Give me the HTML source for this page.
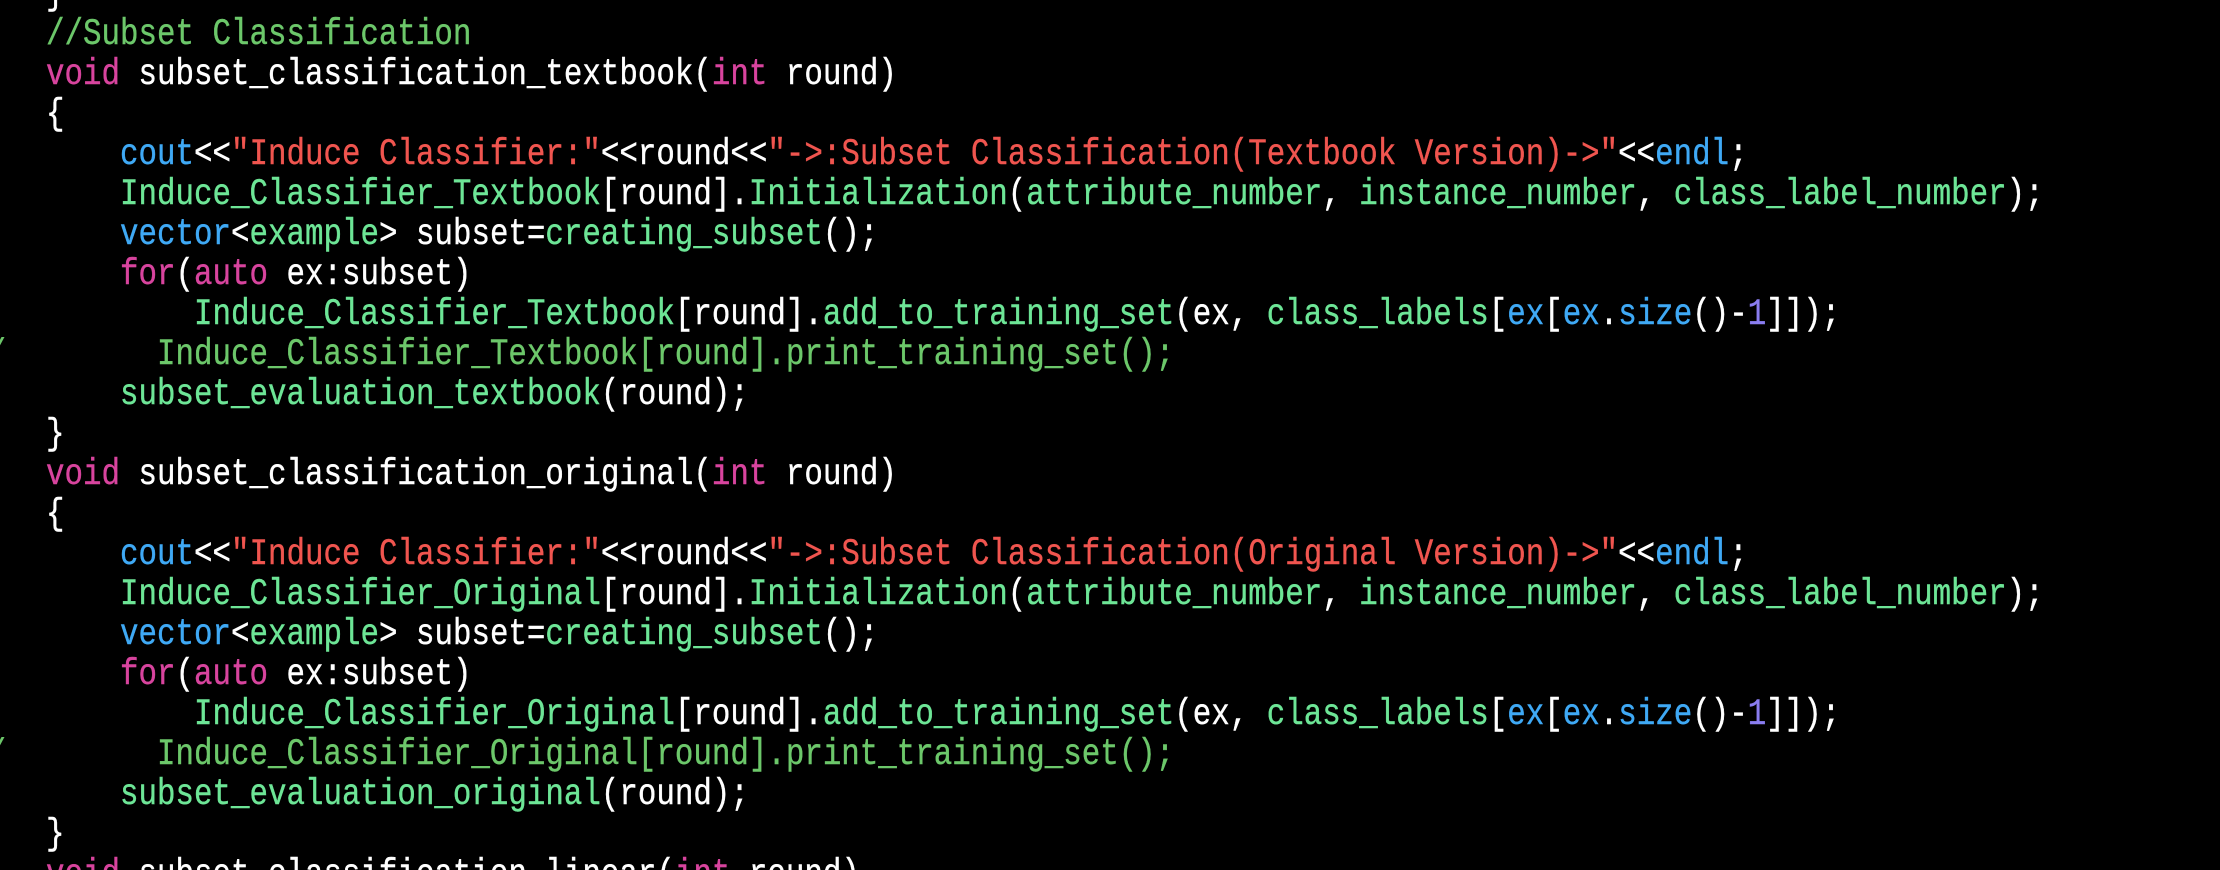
<!DOCTYPE html>
<html><head><meta charset="utf-8"><style>
html,body{margin:0;padding:0;background:#000;width:2220px;height:870px;overflow:hidden;position:relative}
pre{position:absolute;left:46px;top:-25px;margin:0;font-family:"Liberation Mono",monospace;font-size:37px;line-height:40px;color:#fff;white-space:pre;transform:scaleX(0.833);transform-origin:0 0;-webkit-text-stroke:0.4px currentColor}
.c{color:#6cc76a}.k{color:#d8449e}.b{color:#3fa9f5}.s{color:#f0554f}.g{color:#6de596}.n{color:#8a7df0}
.sl{position:absolute;left:-14px;top:334px;font-family:"Liberation Mono",monospace;font-size:34px;color:#6cc76a;line-height:40px}
</style></head><body>
<div class="sl">/</div>
<div class="sl" style="top:734px">/</div>
<pre>}
<span class="c">//Subset Classification</span>
<span class="k">void</span> subset_classification_textbook(<span class="k">int</span> round)
{
    <span class="b">cout</span>&lt;&lt;<span class="s">"Induce Classifier:"</span>&lt;&lt;round&lt;&lt;<span class="s">"-&gt;:Subset Classification(Textbook Version)-&gt;"</span>&lt;&lt;<span class="b">endl</span>;
    <span class="g">Induce_Classifier_Textbook</span>[round].<span class="g">Initialization</span>(<span class="g">attribute_number</span>, <span class="g">instance_number</span>, <span class="g">class_label_number</span>);
    <span class="b">vector</span>&lt;<span class="g">example</span>&gt; subset=<span class="g">creating_subset</span>();
    <span class="k">for</span>(<span class="k">auto</span> ex:subset)
        <span class="g">Induce_Classifier_Textbook</span>[round].<span class="g">add_to_training_set</span>(ex, <span class="g">class_labels</span>[<span class="b">ex</span>[<span class="b">ex</span>.<span class="b">size</span>()-<span class="n">1</span>]]);
<span class="c">      Induce_Classifier_Textbook[round].print_training_set();</span>
    <span class="g">subset_evaluation_textbook</span>(round);
}
<span class="k">void</span> subset_classification_original(<span class="k">int</span> round)
{
    <span class="b">cout</span>&lt;&lt;<span class="s">"Induce Classifier:"</span>&lt;&lt;round&lt;&lt;<span class="s">"-&gt;:Subset Classification(Original Version)-&gt;"</span>&lt;&lt;<span class="b">endl</span>;
    <span class="g">Induce_Classifier_Original</span>[round].<span class="g">Initialization</span>(<span class="g">attribute_number</span>, <span class="g">instance_number</span>, <span class="g">class_label_number</span>);
    <span class="b">vector</span>&lt;<span class="g">example</span>&gt; subset=<span class="g">creating_subset</span>();
    <span class="k">for</span>(<span class="k">auto</span> ex:subset)
        <span class="g">Induce_Classifier_Original</span>[round].<span class="g">add_to_training_set</span>(ex, <span class="g">class_labels</span>[<span class="b">ex</span>[<span class="b">ex</span>.<span class="b">size</span>()-<span class="n">1</span>]]);
<span class="c">      Induce_Classifier_Original[round].print_training_set();</span>
    <span class="g">subset_evaluation_original</span>(round);
}
<span class="k">void</span> subset_classification_linear(<span class="k">int</span> round)
</pre>
</body></html>
